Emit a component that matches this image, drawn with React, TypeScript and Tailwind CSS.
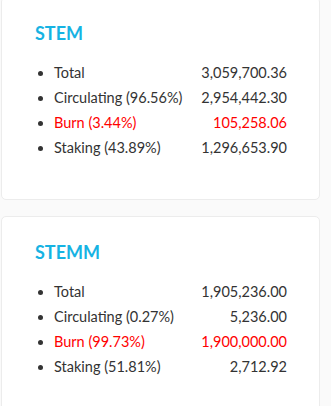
import React from "react";

type Row = { label: string; value: string; burn?: boolean };

const tokens: { name: string; rows: Row[] }[] = [
  {
    name: "STEM",
    rows: [
      { label: "Total", value: "3,059,700.36" },
      { label: "Circulating (96.56%)", value: "2,954,442.30" },
      { label: "Burn (3.44%)", value: "105,258.06", burn: true },
      { label: "Staking (43.89%)", value: "1,296,653.90" },
    ],
  },
  {
    name: "STEMM",
    rows: [
      { label: "Total", value: "1,905,236.00" },
      { label: "Circulating (0.27%)", value: "5,236.00" },
      { label: "Burn (99.73%)", value: "1,900,000.00", burn: true },
      { label: "Staking (51.81%)", value: "2,712.92" },
    ],
  },
];

function SupplyCard({ name, rows }: { name: string; rows: Row[] }) {
  return (
    <div className="ml-px w-[319px] rounded-[5px] border border-[#ececec] bg-white pl-[33px] pr-[32px] pt-[24px] pb-[39px]">
      <h3 className="text-[18px] font-bold leading-[22px] text-[#16b3e3]">{name}</h3>
      <ul className="mt-[16px] list-disc pl-[19px] text-[14.5px] leading-[25px] text-[#333333] marker:text-[#333333]">
        {rows.map((r) => (
          <li key={r.label}>
            <div className={`flex justify-between whitespace-nowrap ${r.burn ? "text-[#ff0000]" : ""}`}>
              <span>{r.label}</span>
              <span>{r.value}</span>
            </div>
          </li>
        ))}
      </ul>
    </div>
  );
}

export default function App() {
  return (
    <div
      className="min-h-[406px] bg-[#fafafa]"
      style={{ fontFamily: "Lato, 'Noto Sans', sans-serif" }}
    >
      <div className="-mt-[3px] flex flex-col gap-[16px]">
        {tokens.map((t) => (
          <SupplyCard key={t.name} name={t.name} rows={t.rows} />
        ))}
      </div>
    </div>
  );
}
